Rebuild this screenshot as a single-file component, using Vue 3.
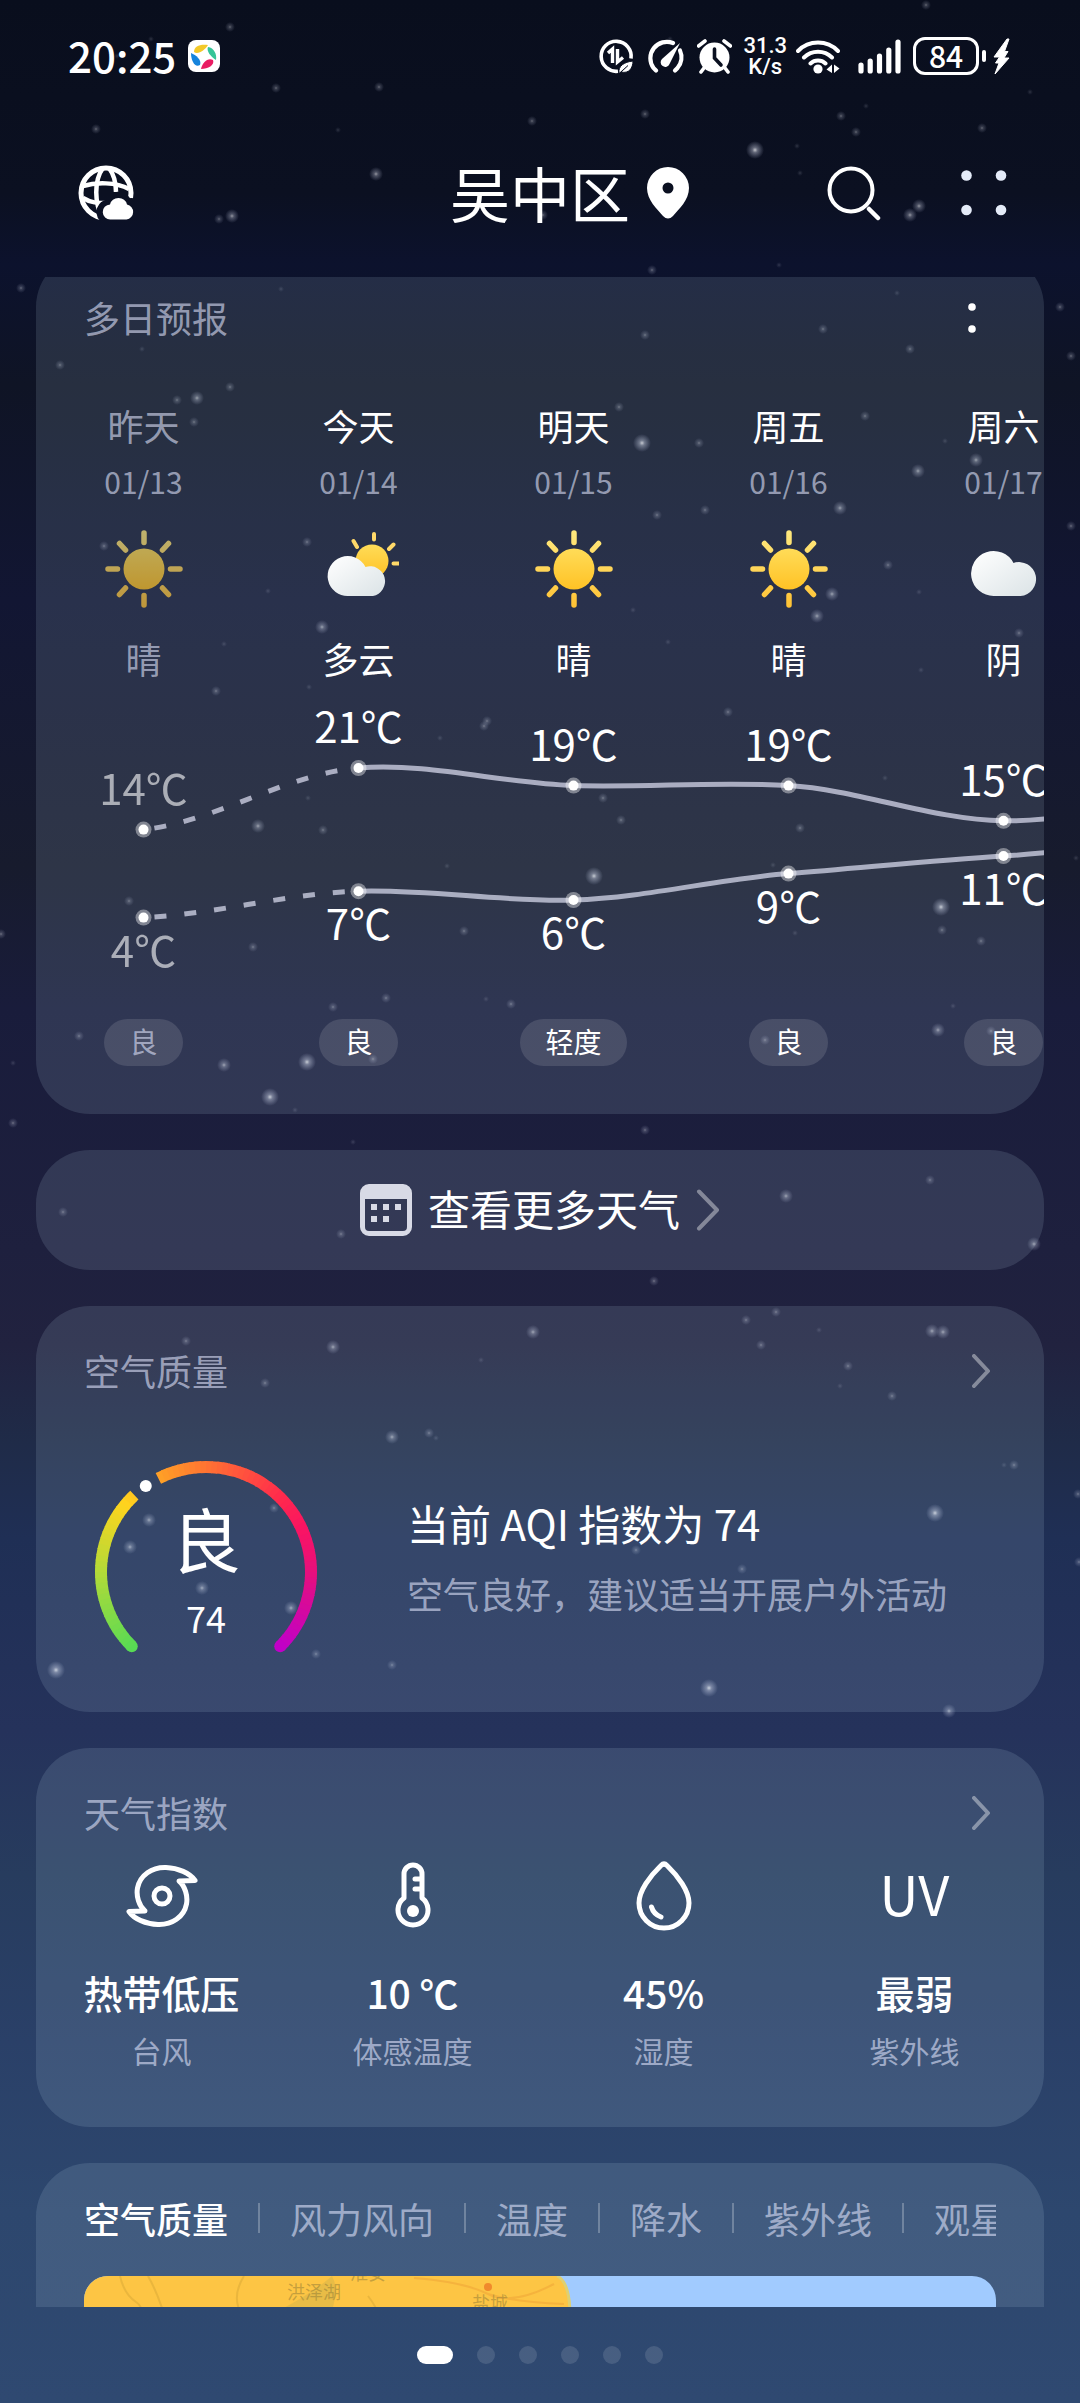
<template>
  <div class="page">
    <svg class="sky" viewBox="0 0 1080 2403" preserveAspectRatio="xMidYMin slice" aria-hidden="true">
      <defs>
        <radialGradient id="star">
          <stop offset="0" stop-color="#fff" stop-opacity="0.95" />
          <stop offset="0.3" stop-color="#dfe3f5" stop-opacity="0.5" />
          <stop offset="1" stop-color="#c8d0f0" stop-opacity="0" />
        </radialGradient>
        <linearGradient id="sun" x1="0" y1="0" x2="0" y2="1">
          <stop offset="0" stop-color="#ffdc58" />
          <stop offset="1" stop-color="#ffc225" />
        </linearGradient>
        <linearGradient id="ray" gradientUnits="userSpaceOnUse" x1="0" y1="0" x2="0" y2="80">
          <stop offset="0" stop-color="#ffea80" />
          <stop offset="1" stop-color="#ffc132" />
        </linearGradient>
        <linearGradient id="cloud" x1="0" y1="0" x2="1" y2="1">
          <stop offset="0" stop-color="#ffffff" />
          <stop offset="1" stop-color="#dbe3e6" />
        </linearGradient>
      </defs>
      <circle
        v-for="([x, y, level], i) in stars"
        :key="i"
        :cx="x"
        :cy="y"
        :r="3 + level * 2"
        :opacity="0.2 + level * 0.2"
        fill="url(#star)"
      />
    </svg>

    <div class="status-bar">
      <div class="status-group">
        <span class="clock">20:25</span>
        <svg class="app-badge" width="32" height="32" viewBox="0 0 32 32">
          <rect width="32" height="32" rx="8" fill="#fff" />
          <path d="M6 12C6 6 12 4 20 5C17 10 10 15 6 12Z" fill="#f3c928" />
          <path d="M20 7C26 8 29 14 28 20C23 17 18 11 20 7Z" fill="#35c497" />
          <path d="M13 29C14 23 20 17 25 20C27 25 20 29 13 29Z" fill="#e91d63" />
          <path d="M3 13C8 15 14 20 12 25C7 28 3 21 3 13Z" fill="#1684dc" />
        </svg>
      </div>
      <div class="status-icons">
        <svg width="35" height="35" viewBox="0 0 35 35">
          <path d="M19 32.2A15 15 0 1 1 32 19.5" fill="none" stroke="#fff" stroke-width="3.6" />
          <path d="M9 14L13.500 10V24M18.500 10V23L24 18.500" fill="none" stroke="#fff" stroke-width="3.4" />
          <path d="M20 34C19 27 25 23 34 22C34 29 30 35 22 33L29 26.500" fill="#fff" stroke="#0a1020" stroke-width="1" />
        </svg>
        <svg width="39" height="35" viewBox="0 0 39 35">
          <path d="M10 31.500L7.500 29A16.500 16.500 0 0 1 27 4" fill="none" stroke="#fff" stroke-width="4.200" stroke-linecap="round" />
          <path d="M34 11.500A16.500 16.500 0 0 1 31.500 29L29 31.500" fill="none" stroke="#fff" stroke-width="4.200" stroke-linecap="round" />
          <path d="M34 4L23.500 25A4.600 4.600 0 1 1 16 20Z" fill="#fff" />
        </svg>
        <svg width="35" height="35" viewBox="0 0 35 35">
          <circle cx="17.5" cy="18.5" r="15" fill="#fff" />
          <path d="M7 29L4 33M28 29L31 33M1.500 7L8 2M33.500 7L27 2" stroke="#fff" stroke-width="3.600" stroke-linecap="round" />
          <path d="M17.500 10V19L24 26" fill="none" stroke="#0a1020" stroke-width="3.600" stroke-linecap="round" />
        </svg>
        <span class="net-speed">
          <span>31.3</span>
          <span>K/s</span>
        </span>
        <svg class="wifi" width="44" height="35" viewBox="0 0 44 35">
          <path d="M2 12A28 28 0 0 1 42 12M8 18.500A20 20 0 0 1 36 18.500M14.500 24.500A11 11 0 0 1 29.500 24.500" fill="none" stroke="#fff" stroke-width="4" stroke-linecap="round" />
          <circle cx="22" cy="30" r="4.600" fill="#fff" />
          <path d="M36 25.500V34L30.500 30.500ZM38 25.500V34L43.500 29.500Z" fill="#fff" />
        </svg>
        <svg width="43" height="35" viewBox="0 0 43 35">
          <path d="M3 26V32M12.200 22V32M21.500 17V32M30.800 11V32M40 3V32" stroke="#fff" stroke-width="5.200" stroke-linecap="round" />
        </svg>
        <span class="battery">
          <span class="battery-level">84</span>
          <span class="battery-nub"></span>
          <svg width="17" height="37" viewBox="0 0 17 37">
            <path d="M14 1L1 19H6.500L2.500 25H6L2 36L16 20H11L15 13.500H11.500L16 1Z" fill="#fff" stroke="#fff" stroke-width="1" />
          </svg>
        </span>
      </div>
    </div>

    <header class="app-header">
      <button type="button" class="icon-btn city-btn" aria-label="城市管理">
        <svg width="56" height="56" viewBox="0 0 56 56">
          <mask id="globe-cut">
            <rect width="56" height="56" fill="#fff" />
            <path d="M32 56A9 9 0 0 1 30 38A10.500 10.500 0 0 1 50 37A9.500 9.500 0 0 1 56 56Z" fill="#000" stroke="#000" stroke-width="7" />
          </mask>
          <g mask="url(#globe-cut)" fill="none" stroke="#fff" stroke-width="5">
            <circle cx="28" cy="28" r="25" />
            <path d="M25 3C16 15 16 39 25 53M31 3C37 11 38 19 38 27" stroke-width="4.500" />
            <path d="M5 21C18 17 38 17 51 24M5 33C13 38 20 38 28 38" stroke-width="4.500" />
          </g>
          <path d="M32.500 54.500A7.500 7.500 0 0 1 32 39.500A8.800 8.800 0 0 1 49 39.500A7.600 7.600 0 0 1 48.500 54.500Z" fill="#fff" />
        </svg>
      </button>
      <h1 class="city">吴中区</h1>
      <div class="header-right">
        <svg class="pin" width="42" height="52" viewBox="0 0 42 52">
          <path d="M21 0A21 21 0 0 1 42 21C42 33 32 42 26 49Q21 54 16 49C10 42 0 33 0 21A21 21 0 0 1 21 0ZM21 15.500A5.500 5.500 0 1 0 21 26.500A5.500 5.500 0 1 0 21 15.500Z" fill="#fff" fill-rule="evenodd" />
        </svg>
        <button type="button" class="icon-btn" aria-label="搜索">
          <svg width="54" height="56" viewBox="0 0 54 56" fill="none" stroke="#fff" stroke-linecap="round">
            <circle cx="24" cy="25" r="21.500" stroke-width="4" />
            <path d="M42 44L51 53" stroke-width="4.500" />
          </svg>
        </button>
        <button type="button" class="icon-btn" aria-label="更多">
          <svg width="46" height="46" viewBox="0 0 46 46" fill="#e4ebf8">
            <circle cx="5.500" cy="5.500" r="5.300" />
            <circle cx="40" cy="5.500" r="5.300" />
            <circle cx="5.500" cy="40" r="5.300" />
            <circle cx="40" cy="40" r="5.300" />
          </svg>
        </button>
      </div>
    </header>

    <main class="scroller">
      <div class="card-list">
        <section class="card forecast">
          <div class="card-head">
            <h2 class="card-title">多日预报</h2>
            <button type="button" class="icon-btn more-btn" aria-label="预报选项">
              <svg width="8" height="30" viewBox="0 0 8 30" fill="#fff">
                <circle cx="4" cy="4" r="3.800" />
                <circle cx="4" cy="26" r="3.800" />
              </svg>
            </button>
          </div>

          <div class="days-scroll">
            <div class="days-track">
              <div class="days-row">
                <div v-for="d in days" :key="d.date" class="day" :class="{ 'day--past': d.past }">
                  <span class="day-name">{{ d.name }}</span>
                  <span class="day-date">{{ d.date }}</span>
                  <svg class="day-icon" width="80" height="80" viewBox="0 0 80 80">
                    <template v-if="d.icon === 'sun'">
                      <path
                        d="M40 4V13.500M40 66.500V76M4 40H13.500M66.500 40H76M15.500 14.500L21.500 21M64.500 14.500L58.500 21M15.500 65.500L21.500 59M64.500 65.500L58.500 59"
                        fill="none" stroke="url(#ray)" stroke-width="5.500" stroke-linecap="round"
                      />
                      <circle cx="40" cy="40" r="20.500" fill="url(#sun)" />
                    </template>
                    <template v-else-if="d.icon === 'partly'">
                      <path
                        d="M55 5V10.500M34.500 12L38 18M74.500 15.500L70 20M74.500 34.500H80"
                        fill="none" stroke="#ffd969" stroke-width="4" stroke-linecap="round"
                      />
                      <circle cx="53" cy="32" r="16.500" fill="url(#sun)" />
                      <path d="M30 67A20 20 0 1 1 46.500 38A15 15 0 1 1 54 67Z" fill="url(#cloud)" />
                    </template>
                    <path v-else d="M30 67A22.500 22.500 0 1 1 49.500 34A17 17 0 1 1 56.500 67Z" fill="url(#cloud)" />
                  </svg>
                  <span class="day-text">{{ d.text }}</span>
                </div>
              </div>

              <svg class="trend" :width="chartWidth" height="338">
                <g fill="none" stroke="#e6e8fa" stroke-opacity="0.68" stroke-width="5">
                  <template v-for="line in trendLines" :key="line.key">
                    <path :d="line.past" stroke-dasharray="12 18" stroke-dashoffset="-11" />
                    <path :d="line.future" />
                  </template>
                </g>
                <g v-for="(d, i) in days" :key="d.date" fill="#fff">
                  <template v-for="t in [d.high, d.low]" :key="t">
                    <circle :cx="px(i)" :cy="py(t)" r="8" fill-opacity="0.4" />
                    <circle :cx="px(i)" :cy="py(t)" r="5" />
                  </template>
                  <g class="trend-label" :opacity="d.past ? 0.6 : 1">
                    <text :x="px(i)" :y="py(d.high) - 25">{{ d.high }}℃</text>
                    <text :x="px(i)" :y="py(d.low) + 49">{{ d.low }}℃</text>
                  </g>
                </g>
              </svg>

              <div class="days-row">
                <div v-for="d in days" :key="d.date" class="day" :class="{ 'day--past': d.past }">
                  <span class="aqi-pill"><span>{{ d.aqi }}</span></span>
                </div>
              </div>
            </div>
          </div>
        </section>

        <a class="card more-link" href="#more">
          <svg width="52" height="52" viewBox="0 0 52 52">
            <path d="M9 0H43A9 9 0 0 1 52 9V43A9 9 0 0 1 43 52H9A9 9 0 0 1 0 43V9A9 9 0 0 1 9 0ZM5 15V43Q5 47 9 47H43Q47 47 47 43V15Z" fill="#d8dae6" fill-rule="evenodd" />
            <path d="M11 20h6v6h-6zM23 20h6v6h-6zM35 20h6v6h-6zM11 32h6v6h-6zM23 32h6v6h-6z" fill="#d8dae6" />
          </svg>
          <span class="more-text">查看更多天气</span>
          <svg width="24" height="42" viewBox="0 0 24 42">
            <path d="M3 2.500L21 21L3 39.500" fill="none" stroke="#fff" stroke-opacity="0.4" stroke-width="4" stroke-linecap="round" stroke-linejoin="round" />
          </svg>
        </a>

        <section class="card air">
          <div class="card-head">
            <h2 class="card-title">空气质量</h2>
            <a class="chevron" href="#air" aria-label="空气质量详情">
              <svg width="18" height="34" viewBox="0 0 18 34"><path d="M2 2L16 17L2 32" /></svg>
            </a>
          </div>
          <div class="air-body">
            <div class="gauge">
              <svg width="222" height="198" viewBox="0 0 222 198">
                <circle :cx="polar(-135)[0]" :cy="polar(-135)[1]" r="6" :fill="gaugeColor(-135)" />
                <circle :cx="polar(135)[0]" :cy="polar(135)[1]" r="6" :fill="gaugeColor(135)" />
                <path v-for="s in gaugeArcs" :key="s.d" :d="s.d" :stroke="s.color" fill="none" stroke-width="12" />
                <circle :cx="polar(-35)[0]" :cy="polar(-35)[1]" r="6" fill="#fff" />
              </svg>
              <div class="gauge-text">
                <span class="gauge-level">良</span>
                <span class="gauge-value">74</span>
              </div>
            </div>
            <div class="air-desc">
              <p class="air-main">当前 AQI 指数为 74</p>
              <p class="air-sub">空气良好，建议适当开展户外活动</p>
            </div>
          </div>
        </section>

        <section class="card indices">
          <div class="card-head">
            <h2 class="card-title">天气指数</h2>
            <a class="chevron" href="#indices" aria-label="天气指数详情">
              <svg width="18" height="34" viewBox="0 0 18 34"><path d="M2 2L16 17L2 32" /></svg>
            </a>
          </div>
          <ul class="index-grid">
            <li v-for="item in indices" :key="item.label" class="index-item">
              <span class="index-icon">
                <svg v-if="item.icon === 'typhoon'" width="72" height="72" viewBox="0 0 72 72">
                  <path d="M19 51C13 46 10 36 11.500 28C14 15 26 7 40 7.500C52 8 64 13 69 20.500L53 21C59 26 62 36 60.500 44C58 57 46 65 32 64.500C20 64 8 59 3 51.500Z" />
                  <circle cx="36" cy="36" r="8" />
                </svg>
                <svg v-else-if="item.icon === 'thermo'" width="36" height="68" viewBox="0 0 36 68">
                  <path d="M9 36V12A9 9 0 0 1 27 12V36A15 15 0 1 1 9 36ZM20 17H26M20 27H26" />
                  <circle cx="18" cy="49" r="6" class="solid" />
                </svg>
                <svg v-else-if="item.icon === 'drop'" width="56" height="70" viewBox="0 0 56 70">
                  <path d="M25 4.500Q28 1.500 31 4.500C42 15 53 30 53 42A25 25 0 0 1 3 42C3 30 14 15 25 4.500ZM15.500 46Q17.500 53 25 56" />
                </svg>
                <span v-else class="uv">UV</span>
              </span>
              <strong class="index-value">{{ item.value }}</strong>
              <span class="index-label">{{ item.label }}</span>
            </li>
          </ul>
        </section>

        <section class="card map-card">
          <nav class="tabs">
            <button
              v-for="(tab, i) in tabs"
              :key="tab"
              type="button"
              class="tab"
              :class="{ 'tab--active': activeTab === i }"
              @click="activeTab = i"
            >{{ tab }}</button>
          </nav>
          <div class="map">
            <svg class="map-land" width="488" height="400" viewBox="0 0 488 400">
              <path d="M0 0H473Q486 6 486 40Q490 200 470 400H0Z" fill="#fdc544" />
              <path d="M473 0Q486 6 486 40Q490 200 470 400" fill="none" stroke="#dfd071" stroke-width="3" />
              <g fill="none" stroke="#b48c28" stroke-opacity="0.25" stroke-width="2">
                <path d="M36 0Q40 18 52 26T54 60M64 0Q72 14 78 32M160 0Q150 16 154 30T148 60M284 20Q300 40 296 60" />
                <path d="M330 2Q380 6 404 18T470 8M404 18Q430 26 480 28" stroke="#e07f28" />
              </g>
              <path d="M196 34Q230 16 248 0Q256 14 246 40H180Z" fill="#c8b04a" fill-opacity="0.4" />
              <circle cx="404" cy="11" r="4" fill="#f08a2c" />
              <g class="map-label">
                <text x="203" y="23">洪泽湖</text>
                <text x="266" y="4">淮安</text>
                <text x="388" y="34">盐城</text>
              </g>
            </svg>
          </div>
        </section>
      </div>
    </main>

    <footer class="pager">
      <button
        v-for="n in 6"
        :key="n"
        type="button"
        class="pager-dot"
        :class="{ 'pager-dot--active': page === n }"
        :aria-label="`第 ${n} 页`"
        @click="page = n"
      ></button>
    </footer>
  </div>
</template>

<script setup>
import { ref } from 'vue'

const page = ref(1)
const activeTab = ref(0)
const tabs = ['空气质量', '风力风向', '温度', '降水', '紫外线', '观星']

const days = [
  { name: '昨天', date: '01/13', icon: 'sun', text: '晴', high: 14, low: 4, aqi: '良', past: true },
  { name: '今天', date: '01/14', icon: 'partly', text: '多云', high: 21, low: 7, aqi: '良' },
  { name: '明天', date: '01/15', icon: 'sun', text: '晴', high: 19, low: 6, aqi: '轻度' },
  { name: '周五', date: '01/16', icon: 'sun', text: '晴', high: 19, low: 9, aqi: '良' },
  { name: '周六', date: '01/17', icon: 'cloudy', text: '阴', high: 15, low: 11, aqi: '良' },
]

const indices = [
  { icon: 'typhoon', value: '热带低压', label: '台风' },
  { icon: 'thermo', value: '10 ℃', label: '体感温度' },
  { icon: 'drop', value: '45%', label: '湿度' },
  { icon: 'uv', value: '最弱', label: '紫外线' },
]

// temperature trend
const dayWidth = 215
const chartWidth = dayWidth * days.length
const px = (i) => (i + 0.5) * dayWidth
const py = (t) => 87 + (21 - t) * 8.8

function segment(temps, i) {
  const at = (n) => py(temps[Math.min(Math.max(n, 0), temps.length - 1)])
  const y1 = at(i) + (at(i + 1) - at(i - 1)) / 8
  const y2 = at(i + 1) - (at(i + 2) - at(i)) / 8
  const k = dayWidth / 3
  return `C${px(i) + k} ${y1} ${px(i + 1) - k} ${y2} ${px(i + 1)} ${at(i + 1)}`
}

function buildLine(key, temps) {
  const rest = temps.slice(1, -1).map((_, i) => segment(temps, i + 1))
  return {
    key,
    past: `M${px(0)} ${py(temps[0])}${segment(temps, 0)}`,
    future: `M${px(1)} ${py(temps[1])}${rest.join('')}`,
  }
}

// the last value only leads the curve out of the visible area
const trendLines = [
  buildLine('high', [...days.map((d) => d.high), 18]),
  buildLine('low', [...days.map((d) => d.low), 13]),
]

// AQI gauge, angles in degrees clockwise from the top
const stops = [
  [-135, [88, 219, 84]],
  [-90, [178, 218, 56]],
  [-50, [255, 212, 30]],
  [-27, [255, 162, 38]],
  [0, [255, 116, 50]],
  [45, [255, 42, 76]],
  [65, [250, 20, 98]],
  [90, [230, 16, 124]],
  [135, [192, 0, 200]],
]

function gaugeColor(a) {
  const n = Math.max(1, stops.findIndex(([s]) => s >= a))
  const [a0, c0] = stops[n - 1]
  const [a1, c1] = stops[n]
  const k = (a - a0) / (a1 - a0)
  return `rgb(${c0.map((c, i) => Math.round(c + (c1[i] - c) * k)).join(', ')})`
}

function polar(a) {
  const rad = (a * Math.PI) / 180
  return [111 + 105 * Math.sin(rad), 111 - 105 * Math.cos(rad)]
}

function arcs(from, to) {
  const list = []
  for (let a = from; a < to; a += 3) {
    const end = Math.min(a + 3.5, to)
    list.push({
      d: `M${polar(a).join(' ')}A105 105 0 0 1 ${polar(end).join(' ')}`,
      color: gaugeColor((a + end) / 2),
    })
  }
  return list
}

const gaugeArcs = [...arcs(-135, -43), ...arcs(-27, 135)]

// [x, y, brightness]
const stars = [
  [230, 27, 1], [151, 39, 0], [276, 88, 1], [379, 87, 1], [96, 129, 1], [338, 130, 0], [376, 174, 2],
  [219, 219, 1], [232, 216, 2], [532, 121, 1], [117, 56, 0], [926, 5, 1], [670, 39, 0], [1030, 92, 0],
  [645, 114, 1], [841, 116, 1], [866, 106, 0], [856, 132, 1], [982, 128, 1], [755, 150, 3], [797, 146, 0],
  [800, 173, 0], [919, 206, 2], [910, 215, 2], [652, 270, 1], [779, 265, 0], [543, 215, 1],
  [21, 288, 1], [281, 289, 0], [142, 349, 0], [60, 365, 1], [230, 387, 1], [177, 400, 1], [197, 398, 2],
  [194, 422, 1], [104, 546, 1], [307, 542, 1], [268, 591, 0], [322, 627, 2], [224, 644, 0], [216, 691, 1],
  [309, 687, 0], [340, 494, 0], [1060, 307, 1], [897, 293, 0], [823, 329, 1], [645, 335, 1], [910, 349, 1],
  [1071, 356, 1], [619, 407, 1], [865, 416, 1], [642, 443, 3], [699, 443, 1], [945, 441, 0], [976, 460, 2],
  [918, 471, 2], [840, 508, 2], [705, 510, 1], [657, 515, 1], [1071, 526, 1], [888, 565, 1], [832, 594, 2],
  [817, 616, 2], [919, 592, 0], [633, 610, 0], [668, 642, 0], [1019, 633, 1], [921, 670, 0],
  [487, 721, 1], [484, 726, 1], [440, 738, 0], [308, 798, 0], [258, 826, 2], [323, 830, 1], [447, 866, 0],
  [129, 901, 1], [464, 931, 1], [253, 947, 1], [1, 934, 1], [79, 1036, 1], [386, 998, 1], [333, 1007, 1],
  [486, 999, 0], [511, 1004, 1], [224, 1065, 2], [307, 1062, 3], [270, 1097, 3], [13, 1063, 0], [13, 1123, 1],
  [295, 1110, 0], [373, 1059, 1], [728, 712, 1], [885, 778, 0], [603, 798, 1], [621, 820, 1], [800, 828, 1],
  [594, 876, 3], [773, 865, 0], [941, 907, 3], [942, 930, 1], [981, 941, 1], [795, 933, 0], [953, 1006, 0],
  [938, 1030, 2], [765, 1040, 1], [991, 1031, 1], [1076, 858, 0], [645, 1130, 1],
  [341, 1234, 1], [786, 1196, 2], [654, 1281, 1], [353, 1142, 0], [930, 1180, 1], [1034, 1244, 2], [63, 1212, 1],
  [186, 1341, 1], [333, 1347, 2], [265, 1383, 1], [533, 1332, 2], [481, 1360, 0], [392, 1437, 2], [429, 1433, 1],
  [436, 1438, 0], [274, 1508, 1], [149, 1520, 2], [130, 1547, 2], [202, 1588, 2], [291, 1608, 2], [316, 1654, 1],
  [392, 1665, 1], [56, 1670, 3], [776, 1312, 1], [746, 1320, 1], [819, 1330, 0], [761, 1345, 1], [932, 1331, 2],
  [943, 1332, 2], [848, 1366, 1], [840, 1386, 0], [892, 1396, 1], [1004, 1465, 0], [1014, 1465, 1],
  [935, 1513, 3], [636, 1550, 1], [742, 1569, 1], [709, 1688, 3], [949, 1711, 2], [1078, 1494, 1], [1079, 1562, 1],
]
</script>

<style>
body {
  margin: 0;
}
</style>

<style scoped>
.page {
  position: relative;
  display: flex;
  flex-direction: column;
  height: 100vh;
  overflow: hidden;
  color: #fff;
  font-family: 'Noto Sans CJK SC', 'Noto Sans', sans-serif;
  background: linear-gradient(
    180deg,
    #090e1d 0%,
    #0b1021 8%,
    #0c122d 11%,
    #0f1425 16%,
    #121633 25%,
    #171b2d 36%,
    #191c3b 42%,
    #1e203e 52%,
    #21223f 56%,
    #1f2b48 60%,
    #1f2f55 64%,
    #25325b 72%,
    #273c5e 78%,
    #2a4068 85%,
    #2d476e 92%,
    #2f4971 100%
  );
}

.page * {
  box-sizing: border-box;
}

.sky {
  position: absolute;
  inset: 0;
  width: 100%;
  height: 100%;
}

svg {
  display: block;
  flex-shrink: 0;
}

button {
  padding: 0;
  border: 0;
  background: none;
  color: inherit;
  font: inherit;
  cursor: pointer;
}

a {
  color: inherit;
  text-decoration: none;
}

h1,
h2,
p,
ul {
  margin: 0;
  padding: 0;
  font-weight: 400;
  list-style: none;
}

/* status bar */
.status-bar {
  position: relative;
  display: flex;
  flex-shrink: 0;
  align-items: center;
  justify-content: space-between;
  height: 112px;
  padding: 0 70px 0 68px;
}

.status-group,
.status-icons {
  display: flex;
  align-items: center;
  gap: 12px;
}

.clock {
  padding-bottom: 2px;
  font-size: 42px;
  font-weight: 500;
  line-height: 48px;
}

.net-speed {
  display: flex;
  flex-direction: column;
  align-items: center;
  margin: 0 -3px 0 -1px;
  font-family: Roboto, 'Noto Sans CJK SC', sans-serif;
  font-size: 22px;
  font-weight: 500;
  line-height: 21px;
}

.wifi {
  margin-right: 6px;
}

.battery {
  display: flex;
  align-items: center;
}

.battery-level {
  width: 66px;
  height: 38px;
  border: 3px solid #fff;
  border-radius: 12px;
  font-size: 30px;
  font-weight: 500;
  line-height: 30px;
  text-align: center;
}

.battery-nub {
  width: 4px;
  height: 12px;
  margin: 0 7px 0 3px;
  border-radius: 2px;
  background: #fff;
}

/* header */
.app-header {
  position: relative;
  display: grid;
  flex-shrink: 0;
  grid-template-columns: 1fr auto 1fr;
  align-items: center;
  height: 165px;
  padding: 0 73px 4px 73px;
}

.icon-btn {
  display: flex;
  align-items: center;
  justify-content: center;
}

.city-btn {
  justify-self: start;
  margin-left: 5px;
}

.city {
  padding-bottom: 2px;
  font-size: 60px;
  line-height: 64px;
}

.header-right {
  display: flex;
  align-items: center;
  gap: 80px;
}

.pin {
  margin: 0 auto 0 17px;
}

/* cards */
.scroller {
  position: relative;
  flex: 1;
  min-height: 0;
  overflow: hidden;
}

.card-list {
  display: flex;
  flex-direction: column;
  gap: 36px;
  margin: -24px 36px 0;
}

.card {
  border-radius: 54px;
  background: rgba(200, 228, 250, 0.13);
  overflow: hidden;
}

.card-head {
  display: flex;
  align-items: center;
  justify-content: space-between;
  height: 84px;
  padding: 46px 54px 0 48px;
}

.card-title {
  padding-bottom: 3px;
  color: rgba(222, 226, 250, 0.62);
  font-size: 36px;
  line-height: 36px;
}

.more-btn {
  width: 36px;
}

.chevron svg {
  fill: none;
  stroke: rgba(255, 255, 255, 0.4);
  stroke-width: 4px;
  stroke-linecap: round;
  stroke-linejoin: round;
}

/* forecast */
.forecast {
  padding-bottom: 48px;
}

.days-scroll {
  overflow-x: auto;
  scrollbar-width: none;
}

.days-track {
  width: max-content;
  padding-top: 68px;
}

.days-row {
  display: flex;
}

.day {
  display: flex;
  flex-direction: column;
  align-items: center;
  width: 215px;
}

.day-name,
.day-text {
  font-size: 36px;
  line-height: 40px;
}

.day-date {
  margin: 18px 0 30px;
  color: rgba(222, 226, 250, 0.62);
  font-size: 30px;
  line-height: 36px;
}

.day-text {
  margin: 29px 0 3px;
}

.day--past .day-icon {
  opacity: 0.7;
}

.day--past .day-name,
.day--past .day-text,
.day--past .aqi-pill span {
  color: rgba(222, 226, 250, 0.62);
}

.trend-label {
  font-size: 42px;
  text-anchor: middle;
}

.aqi-pill {
  height: 47px;
  padding: 0 25px;
  border-radius: 24px;
  background: rgba(255, 255, 255, 0.12);
  font-size: 28px;
  line-height: 44px;
}

/* link to the full forecast */
.more-link {
  display: flex;
  align-items: center;
  justify-content: center;
  gap: 16px;
  height: 120px;
  font-size: 42px;
  line-height: 48px;
}

.more-text {
  padding-bottom: 4px;
}

/* air quality */
.air {
  padding-bottom: 53px;
}

.air-body {
  display: flex;
  align-items: center;
  gap: 90px;
  padding: 71px 48px 0 59px;
}

.gauge {
  display: grid;
}

.gauge > * {
  grid-area: 1 / 1;
}

.gauge-text {
  display: flex;
  flex-direction: column;
  align-items: center;
  padding-top: 42px;
}

.gauge-level {
  font-size: 70px;
  line-height: 70px;
}

.gauge-value {
  margin-top: 24px;
  font-size: 36px;
  line-height: 40px;
}

.air-desc {
  padding-bottom: 8px;
}

.air-main {
  font-size: 42px;
  line-height: 48px;
}

.air-sub {
  margin-top: 26px;
  color: rgba(222, 226, 250, 0.62);
  font-size: 36px;
  line-height: 40px;
}

/* indices */
.indices {
  padding-bottom: 59px;
}

.index-grid {
  display: grid;
  grid-template-columns: repeat(4, 1fr);
  padding: 28px 4px 0 0;
}

.index-item {
  display: flex;
  flex-direction: column;
  align-items: center;
}

.index-icon {
  display: flex;
  align-items: center;
  height: 72px;
}

.index-icon svg {
  fill: none;
  stroke: #fff;
  stroke-width: 5px;
  stroke-linecap: round;
  stroke-linejoin: round;
}

.index-icon .solid {
  fill: #fff;
  stroke: none;
}

.uv {
  padding-bottom: 6px;
  font-size: 54px;
  font-weight: 400;
  line-height: 56px;
}

.index-value {
  margin-top: 38px;
  font-size: 39px;
  font-weight: 500;
  line-height: 44px;
}

.index-label {
  margin-top: 18px;
  color: rgba(222, 226, 250, 0.62);
  font-size: 30px;
  line-height: 36px;
}

/* map */
.map-card {
  padding: 35px 48px 48px;
}

.tabs {
  display: flex;
  overflow: hidden;
}

.tab {
  display: flex;
  flex-shrink: 0;
  align-items: center;
  color: rgba(222, 226, 250, 0.6);
  font-size: 36px;
  line-height: 40px;
}

.tab + .tab::before {
  content: '';
  width: 2px;
  height: 30px;
  margin: 0 30px;
  background: rgba(255, 255, 255, 0.25);
}

.tab--active {
  color: #fff;
  font-weight: 500;
}

.map {
  height: 400px;
  margin-top: 38px;
  border-radius: 24px;
  background: #a1cbff;
  overflow: hidden;
}

.map-label {
  fill: #8d7a36;
  fill-opacity: 0.5;
  font-size: 18px;
}

/* pager */
.pager {
  position: relative;
  display: flex;
  flex-shrink: 0;
  align-items: center;
  justify-content: center;
  gap: 24px;
  height: 96px;
}

.pager-dot {
  width: 18px;
  height: 18px;
  border-radius: 9px;
  background: rgba(255, 255, 255, 0.12);
}

.pager-dot--active {
  width: 36px;
  background: #fff;
}
</style>
